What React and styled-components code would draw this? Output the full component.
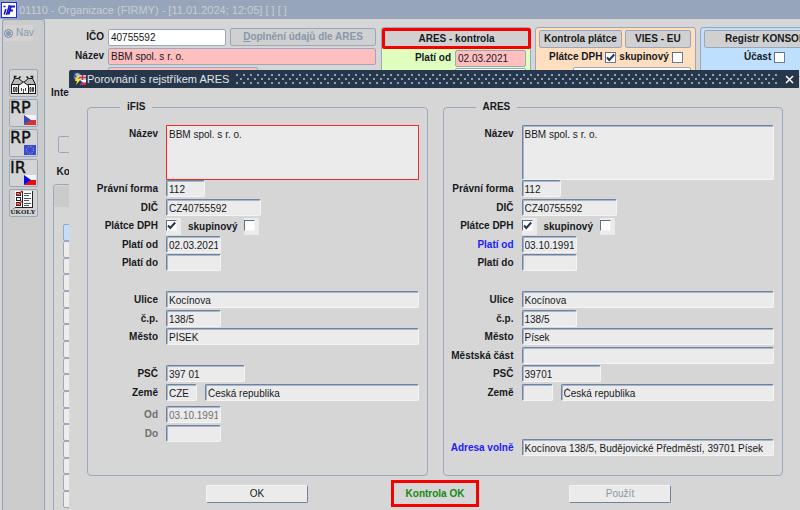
import React from 'react';
import styled, { createGlobalStyle, css } from 'styled-components';

const GlobalStyle = createGlobalStyle`
  * {
    box-sizing: border-box;
  }

  body {
    margin: 0;
    background: #d6d6d6;
    color: #16191d;
    font: 10px/14px "Liberation Sans", Arial, sans-serif;
    overflow: hidden;
  }

  button, input, textarea {
    font: inherit;
    color: inherit;
    margin: 0;
  }
`;

// Application window
const Page = styled.div`
  position: relative;
  display: flex;
  flex-direction: column;
  height: 100vh;
  overflow: hidden;
`;

const AppBar = styled.header`
  display: flex;
  flex: none;
  align-items: center;
  gap: 2px;
  height: 19px;
  padding-left: 1px;
  background: #96a5b9;
  color: #c9cdd3;
  font-size: 11px;
  white-space: pre;
`;

const Workspace = styled.div`
  display: flex;
  flex: 1;
  min-height: 0;
`;

const Sidebar = styled.nav`
  display: flex;
  flex-direction: column;
  gap: 2px;
  flex: 0 0 43px;
  margin-left: 2px;
  padding: 5px 4px 0 1px;
  border: solid #8fa5bb;
  border-width: 1px 1px 0;
  border-radius: 3px 3px 0 0;
  background: #cccccc;
`;

const NavLabel = styled.label`
  display: flex;
  align-items: center;
  gap: 3px;
  width: 29px;
  height: 16px;
  margin-bottom: 26px;
  background: #d3d3d3;
  color: #8797ac;
`;

const NavRadio = styled.input`
  appearance: none;
  flex: none;
  width: 9px;
  height: 9px;
  border: 1px solid #7f91a8;
  border-radius: 50%;
  background: #8a9bb0;
  box-shadow: inset 0 0 0 1px #d6d6d6;
`;

const ToolButton = styled.button`
  width: 29px;
  height: 28px;
  margin-left: 5px;
  padding: 0;
  border: 1px solid #98a9bd;
  border-radius: 2px;
  background: #d4d4d4;

  svg {
    display: block;
    overflow: visible;
  }
`;

const Main = styled.main`
  flex: 1;
  min-width: 0;
`;

const TopForm = styled.div`
  display: flex;
  align-items: flex-start;
  gap: 4px;
  height: 50px;
  margin-top: 8px;
`;

const CompanyFields = styled.div`
  display: grid;
  flex: none;
  grid-template-columns: 59px 118px 146px;
  grid-auto-rows: 18px;
  column-gap: 4px;
  row-gap: 1px;
  align-items: center;
  width: 332px;
  padding-top: 1px;
`;

const Label = styled.label`
  color: ${({ $tone }) => $tone || '#16191d'};
  font-weight: bold;
  text-align: right;
  white-space: nowrap;
`;

const FlatInput = styled.input`
  width: ${({ $width }) => $width || '100%'};
  height: 17px;
  grid-column: ${({ $column }) => $column || 'auto'};
  padding: 0 2px;
  border: 1px solid #98a9bd;
  border-radius: 2px;
  background: ${({ $bg }) => $bg || '#fff'};
`;

const HeadButton = styled.button`
  flex: ${({ $flex }) => $flex || 1};
  height: 18px;
  padding: 0 4px;
  border: 1px solid #98a9bd;
  border-radius: 2px;
  background: #d0d0d0;
  font-weight: bold;
  white-space: nowrap;

  &:disabled {
    color: #8797ac;
  }
`;

const RegistryButton = styled(HeadButton)`
  padding-left: 20px;
  text-align: left;
`;

const StatusPanel = styled.section`
  flex: 0 0 ${({ $width }) => $width};
  min-width: 0;
  height: 50px;
  padding: 2px 4px 0 3px;
  border: 1px solid #9aa9b5;
  border-radius: 3px;
  background: ${({ $bg }) => $bg};
`;

const AresButton = styled(HeadButton)`
  width: 149px;
  height: 21px;
  margin: -2px 0 0 -3px;
  border: 3px solid #f60000;
`;

const PanelRow = styled.div`
  display: flex;
  align-items: center;
  justify-content: ${({ $justify }) => $justify || 'flex-start'};
  gap: ${({ $gap }) => $gap || '3px'};
  height: 18px;
  padding-left: ${({ $indent }) => $indent || '0'};
`;

const LowerForm = styled.div`
  padding: 9px 0 0 6px;
  font-weight: bold;
`;

const SideField = styled.div`
  width: 60px;
  height: 17px;
  margin: 36px 0 12px 7px;
  border: 1px solid #98a9bd;
  border-radius: 2px;
`;

const ListPanel = styled.div`
  display: grid;
  grid-auto-rows: 17px 17px 16px;
  width: 60px;
  margin: 5px 0 0 2px;
  padding: 39px 0 12px 9px;
  border: 1px solid #98a9bd;
  border-radius: 3px;
  background: linear-gradient(#cbcbcb, #cbcbcb) 0 1px / 100% 21px no-repeat;
`;

const ListCell = styled.div`
  border: 1px solid #98a9bd;
  border-radius: 2px;
  background: ${({ $selected }) => ($selected ? '#bfdfff' : '#ededed')};
`;

// Comparison dialog
const Dialog = styled.section`
  position: absolute;
  top: 70px;
  left: 69px;
  right: 1px;
  bottom: 0;
  background: #d6d6d6;
`;

const DialogBar = styled.header`
  display: flex;
  align-items: center;
  height: 18px;
  padding: 0 3px 0 4px;
  border-radius: 2px 0 0 0;
  background: #26374b;
  color: #e3e6ea;
`;

const DialogTitle = styled.h1`
  margin: 0 6px 0 1px;
  font-size: 11px;
  font-weight: normal;
  white-space: nowrap;
`;

const Grip = styled.div`
  flex: 1;
  height: 12px;
  background:
    radial-gradient(circle at 2px 2px, #93a2b3 1px, transparent 1px) 0 0 / 7px 8px,
    radial-gradient(circle at 2px 2px, #93a2b3 1px, transparent 1px) 4px 4px / 7px 8px;
`;

const CloseButton = styled.button`
  display: flex;
  align-items: center;
  width: 11px;
  height: 12px;
  margin-left: 8px;
  padding: 0;
  border: 0;
  background: none;
`;

const Columns = styled.div`
  display: grid;
  grid-template-columns: 1fr 1fr;
  gap: 15px;
  padding: 12px 16px 0 18px;
`;

const Company = styled.fieldset`
  min-width: 0;
  height: 376px;
  margin: 0;
  padding: 0 8px 0 0;
  border: 1px solid #9aa9bd;
  border-radius: 4px;
`;

const Legend = styled.legend`
  margin-left: 32px;
  padding: 0 7px;
  font-weight: bold;
`;

const Rows = styled.div`
  display: grid;
  grid-template-columns: 70px 1fr;
  grid-auto-rows: 18px 19px;
  column-gap: 8px;
  padding-top: 11px;
`;

const RowLabel = styled(Label)`
  grid-column: 1;
  grid-row: ${({ $row }) => $row};
  padding-top: 2px;
`;

const RowBody = styled.div`
  grid-column: 2;
  grid-row: ${({ $row, $span }) => `${$row} / span ${$span || 1}`};
  display: flex;
  align-items: ${({ $align }) => $align || 'flex-start'};
  gap: ${({ $gap }) => $gap || '8px'};
`;

const sunken = css`
  border: 1px solid #f4f4f4;
  border-top-color: #6d83a0;
  border-left-color: #6d83a0;
  border-radius: 2px;
  background: #ebebeb;
  box-shadow: inset 1px 1px 0 #a9b6c6;
`;

const SunkenInput = styled.input`
  ${sunken}
  flex: ${({ $width }) => ($width ? 'none' : '1')};
  width: ${({ $width }) => $width || '100%'};
  min-width: 0;
  height: 17px;
  padding: 1px 2px 0;
`;

const NameArea = styled.textarea`
  ${sunken}
  width: 100%;
  height: 55px;
  padding: 2px;
  resize: none;
  ${({ $differs }) => $differs && css`
    border-color: #f62828;
    border-radius: 0;
    box-shadow: none;
  `}
`;

const LateRows = styled.div`
  grid-column: 1 / span 2;
  grid-row: 16 / span 3;
  display: grid;
  grid-template-columns: 70px 1fr;
  grid-auto-rows: 19px;
  column-gap: 8px;
  padding-top: 4px;
  color: #6f6f6f;
`;

const Tick = styled.span`
  position: relative;
  display: flex;
  align-items: flex-start;
  width: ${({ $cell }) => ($cell ? '15px' : '11px')};
  height: ${({ $cell }) => ($cell ? '17px' : '11px')};
  padding-top: ${({ $cell }) => ($cell ? '2px' : '0')};
  background: #ebebeb;

  svg {
    position: absolute;
    left: 1px;
    top: ${({ $cell }) => ($cell ? '3px' : '1px')};
    pointer-events: none;
  }
`;

const TickBox = styled.input`
  appearance: none;
  width: 11px;
  height: 11px;
  border: 1px solid ${({ $cell }) => ($cell ? '#f4f4f4' : '#6d7f96')};
  border-top-color: #5d6f88;
  border-left-color: #5d6f88;
  background: #fff;
`;

const Footer = styled.footer`
  display: flex;
  align-items: center;
  height: 27px;
  margin-top: 4px;
  padding: 0 128px 0 137px;
`;

const DialogButton = styled.button`
  width: 102px;
  height: 18px;
  padding: 0;
  border: 1px solid #f4f4f4;
  border-right-color: #6d83a0;
  border-bottom-color: #6d83a0;
  border-radius: 2px;
  background: #ebebeb;

  &:last-child {
    margin-left: auto;
  }

  &:disabled {
    color: #8797ac;
  }
`;

const Result = styled.output`
  width: 88px;
  height: 27px;
  margin-left: 83px;
  border: 3px solid #f60000;
  color: #128a12;
  font-weight: bold;
  line-height: 21px;
  text-align: center;
`;

function CheckBox({ id, checked, cell }) {
  return (
    <Tick $cell={cell}>
      <TickBox id={id} type="checkbox" defaultChecked={checked} $cell={cell} />
      {checked && (
        <svg width="9" height="9" viewBox="0 0 9 9" fill="none">
          <path d="M1 4.5 3.3 7 8.2 1.5" stroke="#26374b" strokeWidth="2" />
        </svg>
      )}
    </Tick>
  );
}

function AppLogo() {
  return (
    <svg width="16" height="16" viewBox="0 0 16 16">
      <rect x="0.5" y="0.5" width="15" height="15" fill="#fff" stroke="#2626e8" />
      <path d="M2.5 4.5h2M4.8 7 3.3 12.5M8.5 3 5.5 13" stroke="#1717c8" strokeWidth="1.6" fill="none" />
      <path d="M14 4.5H9.8L7.5 12.5M8.8 8.5H12" stroke="#1717c8" strokeWidth="2" fill="none" />
    </svg>
  );
}

function DialogIcon() {
  return (
    <svg width="13" height="14" viewBox="0 0 13 14">
      <circle cx="4.5" cy="4.5" r="4" fill="#4257b8" />
      <path d="M2 2 5 1 7 3 4 5ZM1 5l3 1-1 2Z" fill="#a9cda5" />
      <rect x="6" y="3" width="7" height="5" fill="#c5c9ee" />
      <path d="M6 5.5h7M9.5 3v5" stroke="#d53434" strokeWidth="1.5" />
      <path d="M4 4 2 9h2l-1 4 5-6H5l2-3Z" fill="#f6e52c" />
      <rect x="7" y="8" width="6" height="5" fill="#fff" />
      <path d="M7 13h6v-2.5h-3Z" fill="#e02727" />
      <path d="m7 8 3 2.5L7 13Z" fill="#2533a8" />
    </svg>
  );
}

function HouseIcon() {
  return (
    <svg width="27" height="26" viewBox="0 0 27 26" fill="none" stroke="#171717">
      <path d="M1.5 14.5 4.5 8.5h4l5 4 5-4h4l3 6Z" fill="#b9b9b9" />
      <path d="M1.5 14.5h8v9h-8ZM17.5 14.5h8v9h-8Z" fill="#f1f1f1" />
      <path d="M8.500 15.500 13.500 12l5 3.500v8h-10Z" fill="#f6f6f6" />
      <path d="M4.5 8.500V6.500h2M22.500 8.500V6.500h-2M8.500 8.500l2-2M18.500 8.500l-2-2" strokeWidth="1.5" />
      <path d="M3.500 17.500h1.500v4H3.500ZM6 17.500h1v4H6ZM20 17.500h1v4h-1ZM22.500 17.500h1v4h-1ZM11.500 18v3M15.500 18v3M13.500 19v4" strokeWidth="0.8" />
      <path d="M1 23.5h25" />
    </svg>
  );
}

function RegistryIcon({ text, flag }) {
  return (
    <svg width="27" height="26" viewBox="0 0 27 26">
      <text x="0" y="13" fontFamily="DejaVu Sans, sans-serif" fontSize="16" fill="#111" stroke="#111" strokeWidth="0.4">{text}</text>
      {flag === 'eu' ? (
        <>
          <rect x="14" y="15" width="12" height="10" fill="#3c49d8" />
          <circle cx="20" cy="20" r="3.5" fill="none" stroke="#d6d04a" strokeDasharray="1 1.75" />
        </>
      ) : (
        <>
          <rect x="14" y="15" width="12" height="10" fill="#f4f4f4" />
          <path d="M14 25h12v-5h-6Z" fill={flag === 'bright' ? '#f00b0b' : '#dc3038'} />
          <path d="m14 15 7 5-7 5Z" fill={flag === 'bright' ? '#0b0be0' : '#3a48b8'} />
        </>
      )}
    </svg>
  );
}

function TasksIcon() {
  return (
    <svg width="27" height="26" viewBox="0 0 27 26">
      <rect x="5" y="1" width="18" height="17" fill="#fff" />
      <path d="M22.5 1v17M5 17.5h18M12.5 1v17" stroke="#222" fill="none" />
      {[2, 7, 12].map((y) => (
        <g key={y}>
          <rect x="6.5" y={y + 0.5} width="4" height="3" fill="#fff" stroke="#222" />
          <path d={`M14 ${y + 1.5}h7M14 ${y + 3.5}h5`} stroke="#555" />
        </g>
      ))}
      <path d="m6 3 2 2 4-4M6 13l2 2 4-4" stroke="#e02020" strokeWidth="1.5" fill="none" />
      <text x="13" y="24" textAnchor="middle" fontFamily="Liberation Serif, serif" fontSize="7" fontWeight="bold" fill="#111">ÚKOLY</text>
    </svg>
  );
}

const ifis = {
  id: 'ifis',
  title: 'iFIS',
  form: '112',
  vat: 'CZ40755592',
  validFrom: '02.03.2021',
  street: 'Kocínova',
  number: '138/5',
  city: 'PÍSEK',
  zip: '397 01',
  countryCode: 'CZE',
  country: 'Česká republika',
};

const ares = {
  id: 'ares',
  title: 'ARES',
  form: '112',
  vat: 'CZ40755592',
  validFrom: '03.10.1991',
  street: 'Kocínova',
  number: '138/5',
  city: 'Písek',
  zip: '39701',
  countryCode: '',
  country: 'Česká republika',
  address: 'Kocínova 138/5, Budějovické Předměstí, 39701 Písek',
};

function Field({ id, row, label, value, width, tone }) {
  return (
    <>
      <RowLabel htmlFor={id} $row={row} $tone={tone}>{label}</RowLabel>
      <RowBody $row={row}>
        <SunkenInput id={id} defaultValue={value} $width={width} />
      </RowBody>
    </>
  );
}

function CompanyCard({ data, children }) {
  const key = (name) => `${data.id}-${name}`;
  const isAres = data.id === 'ares';

  return (
    <Company>
      <Legend>{data.title}</Legend>
      <Rows>
        <RowLabel htmlFor={key('name')} $row={1}>Název</RowLabel>
        <RowBody $row={1} $span={3}>
          <NameArea id={key('name')} defaultValue="BBM spol. s r. o." $differs={!isAres} />
        </RowBody>
        <Field id={key('form')} row={4} label="Právní forma" value={data.form} width="39px" />
        <Field id={key('vat')} row={5} label="DIČ" value={data.vat} width="95px" />
        <RowLabel htmlFor={key('payer')} $row={6}>Plátce DPH</RowLabel>
        <RowBody $row={6} $gap="7px" $align="center">
          <CheckBox id={key('payer')} checked cell />
          <Label htmlFor={key('group')}>skupinový</Label>
          <CheckBox id={key('group')} cell />
        </RowBody>
        <Field id={key('from')} row={7} label="Platí od" value={data.validFrom} width="55px" tone={isAres ? '#1c1cff' : undefined} />
        <Field id={key('to')} row={8} label="Platí do" value="" width="55px" />
        <Field id={key('street')} row={10} label="Ulice" value={data.street} />
        <Field id={key('number')} row={11} label="č.p." value={data.number} width="55px" />
        <Field id={key('city')} row={12} label="Město" value={data.city} />
        {isAres && <Field id={key('part')} row={13} label="Městská část" value="" />}
        <Field id={key('zip')} row={14} label="PSČ" value={data.zip} width="79px" />
        <RowLabel htmlFor={key('code')} $row={15}>Země</RowLabel>
        <RowBody $row={15}>
          <SunkenInput id={key('code')} defaultValue={data.countryCode} $width="31px" />
          <SunkenInput aria-label="Země" defaultValue={data.country} />
        </RowBody>
        {children}
      </Rows>
    </Company>
  );
}

const App = () => {
  return (
    <Page>
      <GlobalStyle />
      <AppBar>
        <AppLogo />
        <span>01110 - Organizace (FIRMY) - [11.01.2024; 12:05] [ ] [ ]</span>
      </AppBar>

      <Workspace>
        <Sidebar>
          <NavLabel><NavRadio type="radio" name="nav" />Nav</NavLabel>
          <ToolButton aria-label="Organizace"><HouseIcon /></ToolButton>
          <ToolButton><RegistryIcon text="RP" flag="cz" /></ToolButton>
          <ToolButton><RegistryIcon text="RP" flag="eu" /></ToolButton>
          <ToolButton><RegistryIcon text="IR" flag="bright" /></ToolButton>
          <ToolButton><TasksIcon /></ToolButton>
        </Sidebar>

        <Main>
          <TopForm>
            <CompanyFields>
              <Label htmlFor="ico">IČO</Label>
              <FlatInput id="ico" defaultValue="40755592" />
              <HeadButton disabled><u>D</u>oplnění údajů dle ARES</HeadButton>
              <Label htmlFor="nazev">Název</Label>
              <FlatInput id="nazev" defaultValue="BBM spol. s r. o." $bg="#ffbfbf" $column="2 / span 2" />
              <FlatInput aria-label="Název 2" $bg="#ffbfbf" $width="150px" $column="2 / span 2" />
            </CompanyFields>

            <StatusPanel $width="150px" $bg="#dfffbf">
              <AresButton>ARES - kontrola</AresButton>
              <PanelRow $justify="flex-end" $gap="4px">
                <Label htmlFor="plati">Platí od</Label>
                <FlatInput id="plati" defaultValue="02.03.2021" $bg="#ffbfbf" $width="71px" />
              </PanelRow>
              <PanelRow $justify="flex-end">
                <FlatInput aria-label="Platí do" $width="71px" />
              </PanelRow>
            </StatusPanel>

            <StatusPanel $width="161px" $bg="#ffdfbf">
              <PanelRow>
                <HeadButton $flex="0 0 79px">Kontrola plátce</HeadButton>
                <HeadButton>VIES - EU</HeadButton>
              </PanelRow>
              <PanelRow $indent="10px">
                <Label htmlFor="dph">Plátce DPH</Label>
                <CheckBox id="dph" checked />
                <Label htmlFor="skup">skupinový</Label>
                <CheckBox id="skup" />
              </PanelRow>
              <PanelRow $justify="flex-end">
                <FlatInput aria-label="Plátce od" $width="118px" />
              </PanelRow>
            </StatusPanel>

            <StatusPanel $width="161px" $bg="#bfdfff">
              <PanelRow>
                <RegistryButton>Registr KONSOL</RegistryButton>
              </PanelRow>
              <PanelRow $indent="40px">
                <Label htmlFor="ucast">Účast</Label>
                <CheckBox id="ucast" />
              </PanelRow>
            </StatusPanel>
          </TopForm>

          <LowerForm>
            Inte
            <SideField />
            <div>&nbsp;&nbsp;Ko</div>
            <ListPanel>
              {Array.from({ length: 17 }, (_, i) => (
                <ListCell key={i} $selected={i === 0} />
              ))}
            </ListPanel>
          </LowerForm>
        </Main>
      </Workspace>

      <Dialog role="dialog" aria-label="Porovnání s rejstříkem ARES">
        <DialogBar>
          <DialogIcon />
          <DialogTitle>Porovnání s rejstříkem ARES</DialogTitle>
          <Grip />
          <CloseButton aria-label="Zavřít">
            <svg width="9" height="9" viewBox="0 0 9 9" stroke="#fff" strokeWidth="1.5">
              <path d="m1 1 7 7M8 1 1 8" />
            </svg>
          </CloseButton>
        </DialogBar>
        <Columns>
          <CompanyCard data={ifis}>
            <LateRows>
              <RowLabel htmlFor="ifis-od" $row={1} $tone="#6f6f6f">Od</RowLabel>
              <SunkenInput id="ifis-od" defaultValue="03.10.1991" $width="55px" />
              <RowLabel htmlFor="ifis-do" $row={2} $tone="#6f6f6f">Do</RowLabel>
              <SunkenInput id="ifis-do" $width="55px" />
            </LateRows>
          </CompanyCard>
          <CompanyCard data={ares}>
            <Field id="ares-address" row={18} label="Adresa volně" value={ares.address} tone="#1c1cff" />
          </CompanyCard>
        </Columns>
        <Footer>
          <DialogButton>OK</DialogButton>
          <Result>Kontrola OK</Result>
          <DialogButton disabled>Použít</DialogButton>
        </Footer>
      </Dialog>
    </Page>
  );
};

export default App;
